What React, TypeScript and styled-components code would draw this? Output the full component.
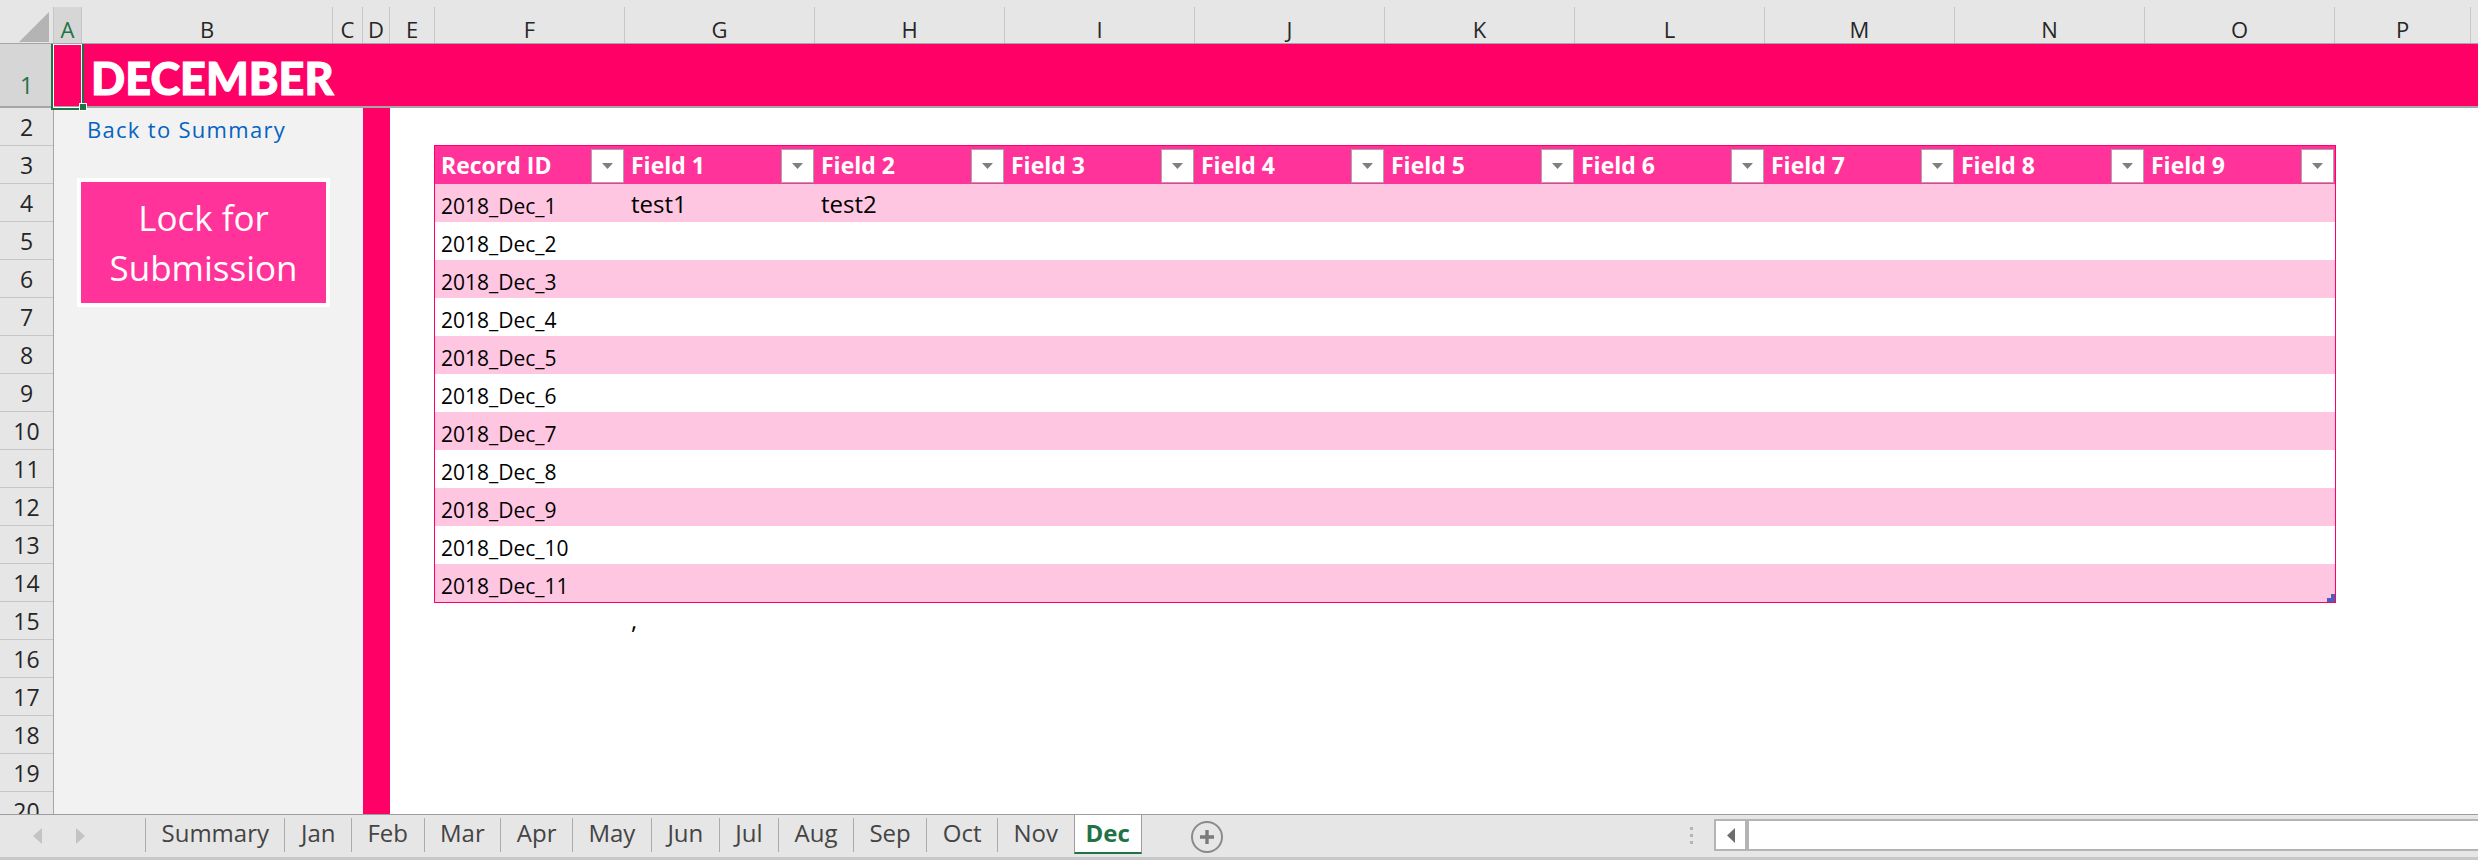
import React from 'react';
import styled, { createGlobalStyle } from 'styled-components';

const GlobalStyle = createGlobalStyle`
  html, body {
    margin: 0;
    padding: 0;
    background: #ffffff;
  }
  body {
    font-family: 'Open Sans', 'Noto Sans', sans-serif;
    overflow: hidden;
  }
  * {
    box-sizing: border-box;
  }
`;

const Page = styled.div`
  width: 2478px;
  height: 860px;
  display: flex;
  flex-direction: column;
  overflow: hidden;
  background: #ffffff;
`;

/* ---------- column letters ---------- */

const ColumnHeaderBar = styled.div`
  display: flex;
  height: 44px;
  flex-shrink: 0;
  padding-top: 7px;
  background: #e6e6e6;
  border-bottom: 1px solid #a6a6a6;
  overflow: hidden;
`;

const Corner = styled.div`
  width: 54px;
  flex-shrink: 0;
  display: flex;
  align-items: flex-end;
  justify-content: flex-end;
  padding: 0 4px 1px 0;
  border-right: 1px solid #c6c6c6;
`;

const ColumnHeaderCell = styled.div<{ $width: number; $selected?: boolean }>`
  width: ${p => p.$width}px;
  flex-shrink: 0;
  display: flex;
  justify-content: center;
  align-items: flex-end;
  padding-bottom: 1px;
  font-size: 22px;
  line-height: 1.2;
  color: ${p => (p.$selected ? '#217346' : '#262626')};
  background: ${p => (p.$selected ? '#d6d6d6' : 'transparent')};
  border-right: 1px solid #c6c6c6;
  overflow: hidden;
`;

/* ---------- sheet ---------- */

const SheetArea = styled.div`
  flex: 1;
  display: flex;
  min-height: 0;
  overflow: hidden;
`;

const RowHeaderColumn = styled.div`
  width: 54px;
  flex-shrink: 0;
  display: flex;
  flex-direction: column;
  background: #e6e6e6;
  border-right: 1px solid #a6a6a6;
  overflow: hidden;
`;

const RowHeaderCell = styled.div<{ $frozen?: boolean }>`
  height: ${p => (p.$frozen ? 64 : 38)}px;
  flex-shrink: 0;
  display: flex;
  justify-content: center;
  align-items: flex-end;
  padding-bottom: ${p => (p.$frozen ? 6 : 3)}px;
  font-size: 23px;
  line-height: 1.2;
  color: ${p => (p.$frozen ? '#217346' : '#262626')};
  background: ${p => (p.$frozen ? '#d6d6d6' : 'transparent')};
  border-bottom: ${p => (p.$frozen ? '2px solid #a6a6a6' : '1px solid #c6c6c6')};
`;

const SheetBody = styled.div`
  flex: 1;
  display: flex;
  flex-direction: column;
  min-width: 0;
`;

const TitleRow = styled.div`
  height: 64px;
  flex-shrink: 0;
  display: flex;
  align-items: flex-end;
  background: #ff0066;
  border-bottom: 2px solid #a6a6a6;
`;

const ActiveCell = styled.div`
  position: relative;
  width: 28px;
  height: 100%;
  flex-shrink: 0;
`;

const Selection = styled.div`
  position: absolute;
  top: -2px;
  left: -3px;
  right: -2px;
  bottom: -4px;
  border: 2px solid #217346;
  box-shadow: inset 0 0 0 1px #ffffff;
`;

const FillHandle = styled.div`
  position: absolute;
  right: -5px;
  bottom: -5px;
  width: 8px;
  height: 8px;
  background: #217346;
  border: 1px solid #ffffff;
`;

const SheetTitle = styled.div`
  margin: 0 0 1px 9px;
  font-family: Lato, 'Open Sans', sans-serif;
  font-weight: 900;
  font-size: 45px;
  line-height: 1.2;
  color: #ffffff;
  -webkit-text-stroke: 1px #ffffff;
`;

const BodyRow = styled.div`
  flex: 1;
  display: flex;
  min-height: 0;
`;

const SidePanel = styled.div`
  width: 309px;
  flex-shrink: 0;
  display: flex;
  flex-direction: column;
  align-items: flex-start;
  padding-left: 23px;
  background: #f2f2f2;
`;

const LinkRow = styled.div`
  height: 38px;
  display: flex;
  align-items: flex-end;
  padding: 0 0 4px 10px;
`;

const SummaryLink = styled.a`
  font-size: 22px;
  line-height: 1.2;
  letter-spacing: 1.3px;
  color: #0563c1;
  text-decoration: none;
`;

const LockButton = styled.div`
  margin-top: 32px;
  width: 253px;
  height: 129px;
  display: flex;
  flex-direction: column;
  align-items: center;
  justify-content: center;
  border: 4px solid #ffffff;
  background: #ff3399;
  color: #ffffff;
  font-size: 35px;
  line-height: 50px;
  text-align: center;
`;

const PinkBar = styled.div`
  width: 27px;
  flex-shrink: 0;
  background: #ff0066;
`;

const MainArea = styled.div`
  flex: 1;
  min-width: 0;
  padding: 37px 0 0 44px;
  background: #ffffff;
`;

/* ---------- table ---------- */

const Table = styled.div`
  position: relative;
  width: 1902px;
  border: 1px solid #ff0066;
`;

const TableRow = styled.div<{ $tone: 'head' | 'band' | 'plain' }>`
  display: grid;
  grid-template-columns: repeat(10, 190px);
  height: 38px;
  background: ${p =>
    p.$tone === 'head' ? '#ff3399' : p.$tone === 'band' ? '#ffc6e2' : '#ffffff'};
`;

const HeaderCell = styled.div`
  display: flex;
  justify-content: space-between;
  align-items: flex-end;
  padding: 0 1px 1px 6px;
  color: #ffffff;
  font-weight: 700;
  font-size: 23px;
`;

const HeaderLabel = styled.span`
  line-height: 1.2;
  margin-bottom: 3px;
  white-space: nowrap;
`;

const FilterButton = styled.div`
  width: 33px;
  height: 34px;
  display: flex;
  align-items: center;
  justify-content: center;
  background: #ffffff;
  border: 1px solid #a6a6a6;
`;

const DataCell = styled.div<{ $size: number }>`
  display: flex;
  align-items: flex-end;
  padding: 0 0 3px 6px;
  font-size: ${p => p.$size}px;
  line-height: 1.2;
  color: #000000;
  white-space: nowrap;
`;

const ResizeHandle = styled.svg`
  position: absolute;
  right: 0;
  bottom: 0;
`;

const LooseRow = styled.div`
  display: grid;
  grid-template-columns: repeat(10, 190px);
  height: 38px;
  margin-left: 1px;
`;

const LooseCell = styled.div`
  display: flex;
  align-items: flex-end;
  padding: 0 0 6px 6px;
  font-size: 24px;
  line-height: 1.2;
  color: #000000;
`;

/* ---------- sheet tabs ---------- */

const TabBar = styled.div`
  height: 46px;
  flex-shrink: 0;
  display: flex;
  align-items: flex-start;
  background: #e6e6e6;
  border-top: 1px solid #9d9d9d;
  border-bottom: 3px solid #c8c8c8;
`;

const NavArrows = styled.div`
  width: 145px;
  height: 42px;
  flex-shrink: 0;
  display: flex;
  align-items: center;
  gap: 34px;
  padding-left: 33px;
`;

const Tab = styled.div<{ $active?: boolean }>`
  flex-shrink: 0;
  margin-top: ${p => (p.$active ? 0 : 3)}px;
  height: ${p => (p.$active ? 39 : 34)}px;
  padding: ${p => (p.$active ? '4px 11px 0' : '1px 15.5px 0')};
  font-size: 24px;
  line-height: 1.2;
  font-weight: ${p => (p.$active ? 700 : 400)};
  color: ${p => (p.$active ? '#217346' : '#444444')};
  background: ${p => (p.$active ? '#ffffff' : 'transparent')};
  border-left: 1px solid ${p => (p.$active ? '#9d9d9d' : '#ababab')};
  border-right: ${p => (p.$active ? '1px solid #9d9d9d' : 'none')};
  border-bottom: ${p => (p.$active ? '2px solid #217346' : 'none')};
`;

const AddSheet = styled.svg`
  flex-shrink: 0;
  margin: 6px 0 0 49px;
`;

const SplitDots = styled.div`
  margin: 12px 21px 0 auto;
  display: flex;
  flex-direction: column;
  gap: 4px;
`;

const Dot = styled.span`
  width: 3px;
  height: 3px;
  background: #b4b4b4;
`;

const HScroll = styled.div`
  width: 764px;
  height: 32px;
  flex-shrink: 0;
  margin-top: 4px;
  display: flex;
  background: #ffffff;
  border: 2px solid #b4b4b4;
  border-right: none;
`;

const ScrollButton = styled.div`
  width: 33px;
  height: 100%;
  display: flex;
  align-items: center;
  justify-content: center;
  border-right: 4px solid #b4b4b4;
`;

// the last column sits past the window edge, so its letter is not shown
const COLUMNS = [
  { label: 'A', width: 28 },
  { label: 'B', width: 251 },
  { label: 'C', width: 30 },
  { label: 'D', width: 27 },
  { label: 'E', width: 45 },
  ...['F', 'G', 'H', 'I', 'J', 'K', 'L', 'M', 'N', 'O'].map(label => ({ label, width: 190 })),
  { label: 'P', width: 136 },
  { label: '', width: 190 },
];

const FIELDS = ['Record ID', ...Array.from({ length: 9 }, (_, i) => `Field ${i + 1}`)];

const RECORDS = Array.from({ length: 11 }, (_, i) => ({
  id: `2018_Dec_${i + 1}`,
  values: i === 0 ? ['test1', 'test2'] : [],
}));

const TABS = ['Summary', 'Jan', 'Feb', 'Mar', 'Apr', 'May', 'Jun', 'Jul', 'Aug', 'Sep', 'Oct', 'Nov', 'Dec'];

const Triangle: React.FC<{ dir: 'left' | 'right' | 'down'; color: string; w: number; h: number }> = ({
  dir,
  color,
  w,
  h,
}) => {
  const points =
    dir === 'down'
      ? `0,0 ${w},0 ${w / 2},${h}`
      : dir === 'left'
      ? `${w},0 ${w},${h} 0,${h / 2}`
      : `0,0 ${w},${h / 2} 0,${h}`;
  return (
    <svg width={w} height={h} viewBox={`0 0 ${w} ${h}`}>
      <polygon points={points} fill={color} />
    </svg>
  );
};

const App: React.FC = () => {
  return (
    <Page>
      <GlobalStyle />

      <ColumnHeaderBar>
        <Corner>
          <svg width="30" height="30" viewBox="0 0 30 30">
            <polygon points="30,0 30,30 0,30" fill="#b4b4b4" />
          </svg>
        </Corner>
        {COLUMNS.map((col, i) => (
          <ColumnHeaderCell key={i} $width={col.width} $selected={col.label === 'A'}>
            {col.label}
          </ColumnHeaderCell>
        ))}
      </ColumnHeaderBar>

      <SheetArea>
        <RowHeaderColumn>
          <RowHeaderCell $frozen>1</RowHeaderCell>
          {Array.from({ length: 19 }, (_, i) => (
            <RowHeaderCell key={i}>{i + 2}</RowHeaderCell>
          ))}
        </RowHeaderColumn>

        <SheetBody>
          <TitleRow>
            <ActiveCell>
              <Selection />
              <FillHandle />
            </ActiveCell>
            <SheetTitle>DECEMBER</SheetTitle>
          </TitleRow>

          <BodyRow>
            <SidePanel>
              <LinkRow>
                <SummaryLink href="#summary">Back to Summary</SummaryLink>
              </LinkRow>
              <LockButton>
                <span>Lock for</span>
                <span>Submission</span>
              </LockButton>
            </SidePanel>

            <PinkBar />

            <MainArea>
              <Table>
                <TableRow $tone="head">
                  {FIELDS.map(field => (
                    <HeaderCell key={field}>
                      <HeaderLabel>{field}</HeaderLabel>
                      <FilterButton>
                        <Triangle dir="down" color="#7f7f7f" w={11} h={6} />
                      </FilterButton>
                    </HeaderCell>
                  ))}
                </TableRow>
                {RECORDS.map((rec, r) => (
                  <TableRow key={rec.id} $tone={r % 2 === 0 ? 'band' : 'plain'}>
                    <DataCell $size={21}>{rec.id}</DataCell>
                    {FIELDS.slice(1).map((f, c) => (
                      <DataCell key={f} $size={24}>
                        {rec.values[c] ?? ''}
                      </DataCell>
                    ))}
                  </TableRow>
                ))}
                <ResizeHandle width="8" height="8" viewBox="0 0 8 8">
                  <polygon points="4,0 8,0 8,8 0,8 0,4 4,4" fill="#4b5fb9" />
                </ResizeHandle>
              </Table>
              <LooseRow>
                <LooseCell />
                <LooseCell>,</LooseCell>
              </LooseRow>
            </MainArea>
          </BodyRow>
        </SheetBody>
      </SheetArea>

      <TabBar>
        <NavArrows>
          <Triangle dir="left" color="#c3c3c3" w={9} h={16} />
          <Triangle dir="right" color="#c3c3c3" w={9} h={16} />
        </NavArrows>
        {TABS.map(tab => (
          <Tab key={tab} $active={tab === 'Dec'}>
            {tab}
          </Tab>
        ))}
        <AddSheet width="32" height="32" viewBox="0 0 32 32">
          <circle cx="16" cy="16" r="15" fill="none" stroke="#8a8a8a" strokeWidth="2" />
          <path d="M16 9v14M9 16h14" stroke="#7a7a7a" strokeWidth="3.4" />
        </AddSheet>
        <SplitDots>
          <Dot />
          <Dot />
          <Dot />
        </SplitDots>
        <HScroll>
          <ScrollButton>
            <Triangle dir="left" color="#6d6d6d" w={8} h={15} />
          </ScrollButton>
        </HScroll>
      </TabBar>
    </Page>
  );
};

export default App;
